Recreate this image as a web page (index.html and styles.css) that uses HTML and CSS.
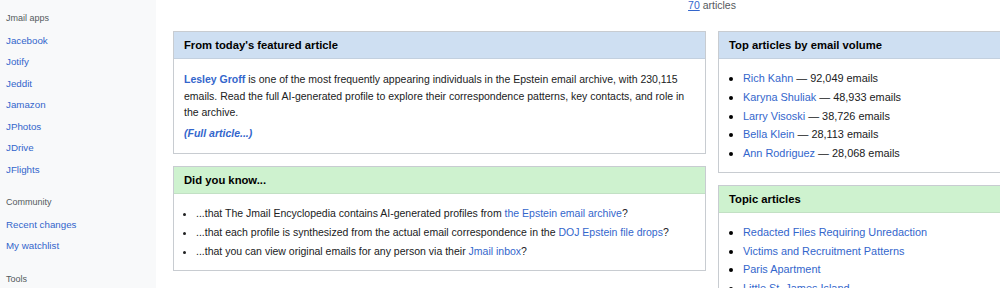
FILE: index.html
```html
<!DOCTYPE html>
<html>
<head>
	<title>Jmail Encyclopedia</title>
	<link rel="stylesheet" href="styles.css">
</head>
<body>
	<div class="page">
		<div class="sidebar">
			<div class="portal">
				<h3>Jmail apps</h3>
				<a href="#">Jacebook</a>
				<a href="#">Jotify</a>
				<a href="#">Jeddit</a>
				<a href="#">Jamazon</a>
				<a href="#">JPhotos</a>
				<a href="#">JDrive</a>
				<a href="#">JFlights</a>
			</div>
			<div class="portal">
				<h3>Community</h3>
				<a href="#">Recent changes</a>
				<a href="#">My watchlist</a>
			</div>
			<div class="portal">
				<h3>Tools</h3>
			</div>
		</div>

		<div class="main">
			<div class="count"><a href="#">70</a> articles</div>

			<div class="columns">
				<div class="column">
					<div class="box">
						<h2 class="box_head">From today's featured article</h2>
						<div class="box_body">
							<p><a class="strong" href="#">Lesley Groff</a> is one of the most frequently appearing individuals in the Epstein email archive, with 230,115 emails. Read the full AI-generated profile to explore their correspondence patterns, key contacts, and role in the archive.</p>
							<p class="more"><a href="#">(Full article...)</a></p>
						</div>
					</div>

					<div class="box">
						<h2 class="box_head green">Did you know...</h2>
						<div class="box_body list">
							<ul class="facts">
								<li>...that The Jmail Encyclopedia contains AI-generated profiles from <a href="#">the Epstein email archive</a>?</li>
								<li>...that each profile is synthesized from the actual email correspondence in the <a href="#">DOJ Epstein file drops</a>?</li>
								<li>...that you can view original emails for any person via their <a href="#">Jmail inbox</a>?</li>
							</ul>
						</div>
					</div>
				</div>

				<div class="column">
					<div class="box">
						<h2 class="box_head">Top articles by email volume</h2>
						<div class="box_body list">
							<ul class="links">
								<li><a href="#">Rich Kahn</a> — 92,049 emails</li>
								<li><a href="#">Karyna Shuliak</a> — 48,933 emails</li>
								<li><a href="#">Larry Visoski</a> — 38,726 emails</li>
								<li><a href="#">Bella Klein</a> — 28,113 emails</li>
								<li><a href="#">Ann Rodriguez</a> — 28,068 emails</li>
							</ul>
						</div>
					</div>

					<div class="box">
						<h2 class="box_head green">Topic articles</h2>
						<div class="box_body list">
							<ul class="links">
								<li><a href="#">Redacted Files Requiring Unredaction</a></li>
								<li><a href="#">Victims and Recruitment Patterns</a></li>
								<li><a href="#">Paris Apartment</a></li>
								<li><a href="#">Little St. James Island</a></li>
								<li><a href="#">Zorro Ranch</a></li>
							</ul>
						</div>
					</div>
				</div>
			</div>
		</div>
	</div>
</body>
</html>
```

FILE: styles.css
```css
/* Base */

html, body { margin: 0; padding: 0; overflow: hidden; }
body { font-family: "Liberation Sans", Arial, sans-serif; color: #202122; background: #fff; }
a { color: #36c; text-decoration: none; }
h2, h3, p, ul { margin: 0; padding: 0; }

/* Layout */

.page { display: flex; align-items: flex-start; min-height: 288px; }
.main { flex: none; width: 1078px; padding-left: 17px; }
.columns { display: grid; grid-template-columns: 1fr 1fr; gap: 12px; margin-top: 21px; }
.column { display: flex; flex-direction: column; gap: 12px; }

/* Sidebar */

.sidebar { flex: none; width: 150px; min-height: 288px; padding: 7px 0 0 6px; background: #f8f9fa; }
.portal { margin-bottom: 11px; }
.portal h3 { font-size: 9px; font-weight: normal; line-height: 22.5px; color: #54595d; }
.portal a { display: block; font-size: 9.75px; line-height: 21.5px; }

/* Count */

.count { text-align: center; font-size: 10.5px; line-height: 10px; color: #54595d; }
.count a { text-decoration: underline; }

/* Boxes */

.box { border: 1px solid #c8ccd1; background: #fff; }
.box_head { height: 26px; line-height: 26px; padding: 0 10px; font-size: 11.25px; font-weight: bold; color: #000; background: #cedff2; border-bottom: 1px solid #c3d0df; }
.box_head.green { background: #cef2cf; border-bottom-color: #c2e0c4; }
.box_body { padding: 12px 10px 12px; font-size: 10.5px; line-height: 16.5px; }
.box_body.list { padding: 10px 10px 9px; }
.strong { font-weight: bold; }
.more { margin-top: 4px; font-weight: bold; font-style: italic; }
.facts { padding-left: 12px; }
.facts li { line-height: 19px; }
.links { padding-left: 14px; font-size: 10.9px; }
.links li { line-height: 18.75px; }
.links li::marker { color: #000; font-size: 12px; }
```
